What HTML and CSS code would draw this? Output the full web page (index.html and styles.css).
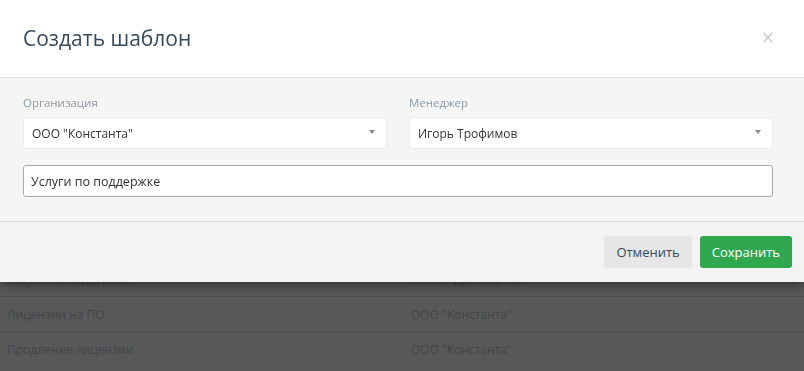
FILE: index.html
```html
<!DOCTYPE html>
<html lang="ru">
<head>
    <meta charset="UTF-8">
    <meta name="viewport" content="width=device-width, initial-scale=1.0">
    <title>Создать шаблон</title>
    <link rel="stylesheet" href="styles.css">
</head>
<body>
    <!-- таблица шаблонов под модальным окном -->
    <table class="templates">
        <tr>
            <td>Услуги по поддержке</td>
            <td>ИП Кондратьев А.В.</td>
        </tr>
        <tr class="striped">
            <td>Лицензии на ПО</td>
            <td>ООО "Константа"</td>
        </tr>
        <tr>
            <td>Продление лицензии</td>
            <td>ООО "Константа"</td>
        </tr>
    </table>

    <div class="modal">
        <div class="modal-header">
            <h2 class="modal-title">Создать шаблон</h2>
            <button class="modal-close">&times;</button>
        </div>

        <div class="modal-body">
            <div class="form-row">
                <div class="form-group">
                    <label class="form-label">Организация</label>
                    <div class="select">
                        <span>ООО "Константа"</span>
                        <span class="select-caret"></span>
                    </div>
                </div>
                <div class="form-group">
                    <label class="form-label">Менеджер</label>
                    <div class="select">
                        <span>Игорь Трофимов</span>
                        <span class="select-caret"></span>
                    </div>
                </div>
            </div>
            <input class="text-input" type="text" value="Услуги по поддержке">
        </div>

        <div class="modal-footer">
            <button class="btn btn-default">Отменить</button>
            <button class="btn btn-success">Сохранить</button>
        </div>
    </div>
</body>
</html>
```

FILE: styles.css
```css
* {
    margin: 0;
    padding: 0;
    box-sizing: border-box;
}

body {
    font-family: 'Open Sans', 'Noto Sans', sans-serif;
    color: #34495e;
    background-color: #585858;
    overflow: hidden;
}

.templates {
    width: 100%;
    margin-top: 261px;
    border-collapse: collapse;
    font-size: 12px;
    color: #42464b;
}

.templates td {
    height: 35px;
    padding: 0 7px;
    border-top: 1px solid #4f4f4f;
    vertical-align: middle;
}

.templates td:last-child {
    width: 400px;
}

.templates tr.striped td {
    background-image: radial-gradient(#606060 0.6px, transparent 0.8px);
    background-size: 8px 8px;
}

.modal {
    position: fixed;
    top: 0;
    left: 0;
    right: 0;
    background: #fff;
    box-shadow: 0 3px 10px rgba(0, 0, 0, 0.45);
}

.modal-header {
    height: 78px;
    padding: 0 29px 0 23px;
    display: flex;
    justify-content: space-between;
    align-items: center;
    border-bottom: 1px solid #dddddd;
}

.modal-title {
    font-size: 21px;
    font-weight: 400;
    color: #34495e;
    margin-top: -2px;
}

.modal-close {
    background: none;
    border: none;
    font-family: 'DejaVu Sans', sans-serif;
    font-size: 17px;
    line-height: 1;
    color: #c8c8c8;
    cursor: pointer;
    margin-top: -2px;
}

.modal-body {
    background: #f5f5f5;
    padding: 17px 31px 24px 23px;
    border-bottom: 1px solid #dddddd;
}

.form-row {
    display: flex;
    gap: 22px;
    margin-bottom: 16px;
}

.form-group {
    flex: 1;
}

.form-label {
    display: block;
    font-size: 11.5px;
    color: #8e9aa6;
    margin-bottom: 7px;
}

.select {
    height: 32px;
    padding: 0 11px 0 8px;
    background: #fff;
    border: 1px solid #ececec;
    border-radius: 3px;
    display: flex;
    justify-content: space-between;
    align-items: center;
    font-size: 12px;
    color: #333;
}

.select-caret {
    width: 0;
    height: 0;
    border-left: 3.5px solid transparent;
    border-right: 3.5px solid transparent;
    border-top: 4.5px solid #8a8a8a;
    margin-top: -2px;
}

.text-input {
    display: block;
    width: 100%;
    height: 32px;
    padding: 0 7px;
    border: 1px solid #a9a9a9;
    border-radius: 3px;
    font-family: inherit;
    font-size: 12.5px;
    color: #333;
    background: #fff;
}

.modal-footer {
    background: #f3f3f3;
    height: 60px;
    padding: 0 12px;
    display: flex;
    justify-content: flex-end;
    align-items: center;
    gap: 8px;
}

.btn {
    height: 32px;
    padding: 0 12px;
    border: none;
    border-radius: 3px;
    font-family: inherit;
    font-size: 13px;
    cursor: pointer;
}

.btn-default {
    background: #e6e6e6;
    color: #34495e;
}

.btn-success {
    background: #2fa84f;
    color: #fff;
}
```
